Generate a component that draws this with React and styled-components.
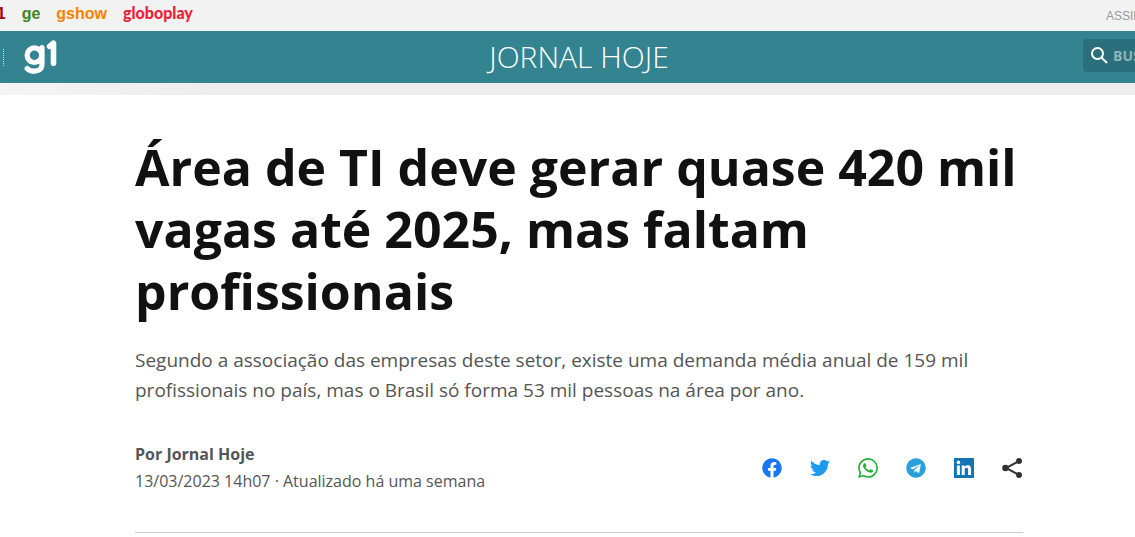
import React from "react";
import styled, { createGlobalStyle } from "styled-components";
import { FaFacebook, FaTwitter, FaTelegram } from "react-icons/fa";
import { SiWhatsapp } from "react-icons/si";

const GlobalStyle = createGlobalStyle`
  * { box-sizing: border-box; }
  body {
    margin: 0;
    background: #fff;
    color: #555;
    font-family: "Open Sans", sans-serif;
    overflow-x: hidden;
  }
  a { color: inherit; text-decoration: none; }
`;

const TopBar = styled.nav`
  display: flex;
  align-items: flex-start;
  justify-content: space-between;
  height: 31px;
  padding-top: 4px;
  overflow: hidden;
  background: #f2f2f2;
  font-family: "Liberation Sans", Arial, sans-serif;
  white-space: nowrap;
`;

const Products = styled.ul`
  display: flex;
  align-items: flex-start;
  margin: 0 0 0 -21px;
  padding: 0;
  list-style: none;
`;

const Product = styled.li`
  display: flex;
  align-items: center;
  padding: 0 8px;
  color: ${(p) => p.$color};
  font-size: 16px;
  line-height: ${(p) => (p.$brand ? 18 : 20)}px;
  font-weight: ${(p) => (p.$brand ? 900 : 700)};
  font-family: ${(p) => (p.$brand ? '"Lato", sans-serif' : "inherit")};

  & + &::before {
    content: "";
    width: 1px;
    height: 10px;
    margin: 0 7px 0 -8px;
    background: #d8d8d8;
  }
`;

const Subscribe = styled.a`
  width: 29px;
  padding-top: 4px;
  color: #999;
  font-size: 12px;
  line-height: 16px;
`;

const Header = styled.header`
  display: grid;
  grid-template-columns: 1fr auto 1fr;
  align-items: center;
  height: 52px;
  padding-left: 23px;
  background: #338391;
  color: #fff;
  overflow: hidden;
`;

const Brand = styled.a`
  display: flex;
  align-items: center;
  gap: 20px;
  margin-left: -20px;
`;

const Divider = styled.span`
  height: 17px;
  border-left: 1px dotted #c5dde0;
`;

const Section = styled.a`
  font-size: 30px;
  line-height: 52px;
  font-weight: 300;
`;

const Search = styled.label`
  align-self: start;
  justify-self: end;
  display: flex;
  align-items: center;
  gap: 5px;
  width: 52px;
  height: 33px;
  margin-top: 8px;
  padding-left: 8px;
  border-radius: 4px 0 0 4px;
  background: #2a6f7b;
  overflow: hidden;

  svg { flex: none; }
`;

const SearchInput = styled.input`
  flex: none;
  width: 80px;
  padding: 0;
  border: 0;
  outline: 0;
  background: transparent;
  color: #fff;
  font: 700 14px/20px "Open Sans", sans-serif;

  &::placeholder { color: #8db5bc; opacity: 1; }
`;

const Band = styled.div`
  height: 12px;
  background: linear-gradient(90deg, #f4f4f4, #ededed 220px);
`;

const Page = styled.main`
  padding-left: 23px;
`;

const Article = styled.article`
  max-width: 888px;
  margin: 0 auto;
  padding-top: 41px;
`;

const Title = styled.h1`
  margin: 0;
  color: #111;
  font-size: 50px;
  line-height: 62px;
  font-weight: 700;
`;

const Lead = styled.h2`
  margin: 23px 0 36px;
  font-size: 19px;
  line-height: 30px;
  font-weight: 400;
`;

const Meta = styled.div`
  display: flex;
  align-items: center;
  justify-content: space-between;
  padding-bottom: 37px;
  border-bottom: 1px solid #ccc;
`;

const Byline = styled.div`
  font-size: 16px;
  line-height: 27px;
`;

const Author = styled.strong`
  display: block;
`;

const ShareList = styled.ul`
  display: flex;
  gap: 28px;
  margin: 0;
  padding: 0;
  list-style: none;
`;

const ShareLink = styled.a`
  display: block;
  width: 20px;
  height: 20px;
  color: ${(p) => p.$color};

  svg { display: block; width: 20px; height: 20px; }
`;

const ShareButton = styled.button`
  display: block;
  padding: 0;
  border: 0;
  background: none;
  color: #333;

  svg { display: block; }
`;

const products = [
  { name: "g1", color: "#a80000" },
  { name: "ge", color: "#3c8521" },
  { name: "gshow", color: "#ff7f00" },
  { name: "globoplay", color: "#ee1e36", brand: true },
];

const G1Logo = () => (
  <svg width="34" height="36" viewBox="0 0 34 36" fill="none" stroke="#fff" strokeWidth="5.2" aria-label="g1" role="img">
    <circle cx="10.4" cy="16.2" r="7.3" />
    <path d="M18 8.6V25.2C18 29.8 15 32.2 10.6 32.2C7.4 32.2 5 31.4 3.2 29.6" strokeLinecap="round" />
    <path d="M25.6 7.4L29.5 4.2V24.2" strokeWidth="5.6" strokeLinecap="round" strokeLinejoin="round" />
  </svg>
);

const SearchIcon = () => (
  <svg width="17" height="17" viewBox="0 0 17 17" fill="none" stroke="#fff" strokeWidth="2">
    <circle cx="6.5" cy="6.5" r="5.5" />
    <path d="M10.5 10.5L16 16" />
  </svg>
);

const LinkedinIcon = () => (
  <svg viewBox="0 0 20 20">
    <rect width="20" height="20" rx="0.5" fill="#1275b1" />
    <g fill="#fff">
      <circle cx="4.4" cy="4.4" r="1.8" />
      <path d="M2.9 7.5h3v9.6h-3zM7.7 7.5h2.9v1.3c.5-.9 1.5-1.6 2.9-1.6 3 0 3.6 2 3.6 4.6v5.3h-3v-4.7c0-1.1 0-2.6-1.6-2.6s-1.8 1.2-1.8 2.5v4.8h-3z" />
    </g>
  </svg>
);

const ShareIcon = () => (
  <svg width="21" height="20" viewBox="0 0 21 20">
    <path d="M17 3L4 10L17 17" fill="none" stroke="#333" strokeWidth="2" />
    <g fill="#333">
      <circle cx="17" cy="3" r="3" />
      <circle cx="3.4" cy="10" r="3.2" />
      <circle cx="17" cy="17" r="3" />
    </g>
  </svg>
);

const networks = [
  { name: "Facebook", color: "#1877f2", Icon: FaFacebook },
  { name: "Twitter", color: "#1d9bf0", Icon: FaTwitter },
  { name: "WhatsApp", color: "#25b03b", Icon: SiWhatsapp },
  { name: "Telegram", color: "#27a0dc", Icon: FaTelegram },
  { name: "LinkedIn", color: "#1275b1", Icon: LinkedinIcon },
];

export default function App() {
  return (
    <>
      <GlobalStyle />
      <TopBar>
        <Products>
          {products.map((p) => (
            <Product key={p.name} $color={p.color} $brand={p.brand}>
              <a href="#">{p.name}</a>
            </Product>
          ))}
        </Products>
        <Subscribe href="#">ASSINE JÁ</Subscribe>
      </TopBar>
      <Header>
        <Brand href="#">
          <Divider />
          <G1Logo />
        </Brand>
        <Section href="#">JORNAL HOJE</Section>
        <Search>
          <SearchIcon />
          <SearchInput type="search" placeholder="BUSCAR" aria-label="Buscar" />
        </Search>
      </Header>
      <Band />
      <Page>
        <Article>
          <Title>Área de TI deve gerar quase 420 mil vagas até 2025, mas faltam profissionais</Title>
          <Lead>
            Segundo a associação das empresas deste setor, existe uma demanda média anual de 159 mil
            profissionais no país, mas o Brasil só forma 53 mil pessoas na área por ano.
          </Lead>
          <Meta>
            <Byline>
              <Author>Por Jornal Hoje</Author>
              <time dateTime="2023-03-13T14:07">13/03/2023 14h07</time> · Atualizado há uma semana
            </Byline>
            <ShareList>
              {networks.map(({ name, color, Icon }) => (
                <li key={name}>
                  <ShareLink href="#" aria-label={name} $color={color}>
                    <Icon />
                  </ShareLink>
                </li>
              ))}
              <li>
                <ShareButton type="button" aria-label="Compartilhar">
                  <ShareIcon />
                </ShareButton>
              </li>
            </ShareList>
          </Meta>
        </Article>
      </Page>
    </>
  );
}
